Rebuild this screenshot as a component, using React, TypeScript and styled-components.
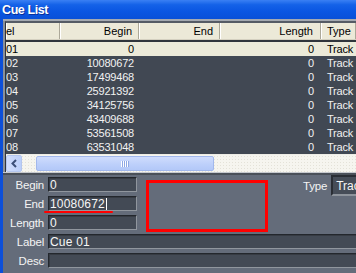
import React from "react";
import styled, { createGlobalStyle } from "styled-components";

const Global = createGlobalStyle`
  html, body { margin: 0; padding: 0; background: #646c7a; }
  body { width: 356px; height: 273px; overflow: hidden; font-family: "Liberation Sans", Arial, sans-serif; }
`;

const Window = styled.div`
  width: 356px;
  height: 273px;
  display: flex;
  flex-direction: column;
  overflow: hidden;
  background: #646c7a;
`;

const TitleBar = styled.div`
  height: 19px;
  flex: none;
  display: flex;
  align-items: center;
  padding-left: 2px;
  background: linear-gradient(#3a80f4 0%, #1462e8 25%, #0a56e2 60%, #0950d8 100%);
  color: #fff;
  font-weight: bold;
  font-size: 12.5px;
  letter-spacing: -0.4px;
  text-shadow: 1px 1px 0 #0a2f9a;
`;

const Body = styled.div`
  flex: 1;
  display: flex;
  flex-direction: column;
  border-left: 3px solid #0c4fd9;
  min-height: 0;
`;

const ListArea = styled.div`
  flex: none;
  background: #8a9098;
  border-top: 2px solid #a4a9b1;
  padding-left: 2px;
`;

const ListBox = styled.div`
  border-top: 2px solid #555b65;
  border-left: 1px solid #30353c;
  background: #414853;
  overflow: hidden;
`;

const HeaderRow = styled.div`
  display: flex;
  height: 17px;
  background: #ece9d8;
  border-bottom: 1px solid #d4d0c0;
  box-sizing: border-box;
`;

const HeaderCell = styled.div<{ $w: number; $align: string; $pad: number }>`
  flex: none;
  width: ${(p) => p.$w}px;
  box-sizing: border-box;
  overflow: hidden;
  white-space: nowrap;
  display: flex;
  align-items: center;
  justify-content: ${(p) => p.$align};
  padding: 0 ${(p) => p.$pad}px;
  border-right: 1px solid #aca899;
  box-shadow: inset 1px 0 0 #ffffff;
  font-size: 11px;
  color: #000;
`;

const HeadSep = styled.div`
  height: 2px;
  background: #30353c;
`;

const Row = styled.div<{ $sel?: boolean }>`
  display: flex;
  height: 14px;
  background: ${(p) => (p.$sel ? "#ecead9" : "#414853")};
  color: ${(p) => (p.$sel ? "#000" : "#f2f2f2")};
  font-size: 11px;
  letter-spacing: -0.2px;
`;

const Cell = styled.div<{ $w: number; $align: string; $pad: number }>`
  flex: none;
  width: ${(p) => p.$w}px;
  box-sizing: border-box;
  overflow: hidden;
  white-space: nowrap;
  display: flex;
  align-items: center;
  justify-content: ${(p) => p.$align};
  padding: 0 ${(p) => p.$pad}px;
`;

const ListBottom = styled.div`
  height: 1px;
  background: #eeede6;
`;

const ScrollBar = styled.div`
  display: flex;
  height: 17px;
  background: #f6f5ef;
  background-image: radial-gradient(#e4e2d8 0.6px, transparent 0.7px);
  background-size: 3px 3px;
`;

const ArrowBtn = styled.div`
  width: 16px;
  flex: none;
  box-sizing: border-box;
  border: 1px solid #b4c6ee;
  border-radius: 2px;
  background: linear-gradient(90deg, #d2defc, #bccffa);
  display: flex;
  align-items: center;
  justify-content: center;
`;

const TrackGap = styled.div`
  width: 14px;
  flex: none;
`;

const Thumb = styled.div`
  width: 178px;
  flex: none;
  box-sizing: border-box;
  border: 1px solid #a2b8ec;
  border-radius: 2px;
  margin: 1px 0;
  background: linear-gradient(#cfdcfd, #bccffa 60%, #b3c8f8);
  display: flex;
  align-items: center;
  justify-content: center;
`;

const Grip = styled.div`
  width: 8px;
  height: 6px;
  background: repeating-linear-gradient(90deg, #ffffff 0 1px, #8ea8e4 1px 2px);
`;

const BandLight = styled.div`
  height: 1px;
  background: #c6c9ce;
`;

const BandDark = styled.div`
  height: 2px;
  background: #4a5059;
`;

const Panel = styled.div`
  position: relative;
  flex: 1;
  display: flex;
  flex-direction: column;
  gap: 4px;
  padding-top: 2px;
  background: #646c7a;
`;

const TopRow = styled.div`
  display: flex;
  align-items: flex-start;
`;

const Fields = styled.div`
  display: flex;
  flex-direction: column;
  gap: 4px;
`;

const FieldRow = styled.div`
  display: grid;
  grid-template-columns: 41px auto;
  column-gap: 4px;
  align-items: center;
`;

const Label = styled.div`
  text-align: right;
  color: #f4f4f4;
  font-size: 11.5px;
  letter-spacing: -0.2px;
  white-space: nowrap;
`;

const Input = styled.div<{ $w: number }>`
  width: ${(p) => p.$w}px;
  height: 15px;
  box-sizing: border-box;
  border: 1px solid;
  border-color: #23272d #90969e #90969e #23272d;
  box-shadow: inset 1px 1px 0 #363b43;
  background: #434a55;
  color: #f6f6f6;
  font-size: 12px;
  letter-spacing: 0.2px;
  padding-left: 1px;
  display: flex;
  align-items: center;
  white-space: nowrap;
  overflow: hidden;
`;

const Caret = styled.span`
  display: inline-block;
  width: 1px;
  height: 12px;
  background: #ffffff;
  margin-left: 1px;
`;

const TypeGroup = styled.div`
  margin-left: 166px;
  margin-top: -2px;
  display: flex;
  align-items: center;
  gap: 4px;
`;

const TypeBox = styled.div`
  width: 26px;
  height: 21px;
  flex: none;
  box-sizing: border-box;
  border: 2px solid;
  border-right: 0;
  border-color: #2a2e35 #8e949c #8e949c #2a2e35;
  background: #464d58;
  color: #f6f6f6;
  font-size: 12px;
  padding-left: 3px;
  display: flex;
  align-items: center;
  white-space: nowrap;
  overflow: hidden;
`;

const RedBox = styled.div`
  position: absolute;
  left: 143px;
  top: 5px;
  width: 122px;
  height: 52px;
  box-sizing: border-box;
  border: 3px solid #ff0000;
`;

const RedLine = styled.div`
  position: absolute;
  left: 41px;
  top: 36px;
  width: 69px;
  height: 2px;
  border-radius: 1px;
  background: #ff0000;
`;

const cols = [
  { key: "label", title: "el", w: 54, align: "flex-start", pad: 0 },
  { key: "begin", title: "Begin", w: 79, align: "flex-end", pad: 6 },
  { key: "end", title: "End", w: 81, align: "flex-end", pad: 6 },
  { key: "length", title: "Length", w: 101, align: "flex-end", pad: 7 },
  { key: "type", title: "Type", w: 35, align: "flex-start", pad: 6 },
];

const rows = [
  ["01", "0"],
  ["02", "10080672"],
  ["03", "17499468"],
  ["04", "25921392"],
  ["05", "34125756"],
  ["06", "43409688"],
  ["07", "53561508"],
  ["08", "63531048"],
];

export default function App() {
  return (
    <Window>
      <Global />
      <TitleBar>Cue List</TitleBar>
      <Body>
        <ListArea>
          <ListBox>
            <HeaderRow>
              {cols.map((c) => (
                <HeaderCell key={c.key} $w={c.w} $align={c.align} $pad={c.pad}>
                  {c.title}
                </HeaderCell>
              ))}
            </HeaderRow>
            <HeadSep />
            {rows.map((r, i) => (
              <Row key={r[0]} $sel={i === 0}>
                <Cell $w={54} $align="flex-start" $pad={0}>{r[0]}</Cell>
                <Cell $w={79} $align="flex-end" $pad={5}>{r[1]}</Cell>
                <Cell $w={81} $align="flex-end" $pad={5}></Cell>
                <Cell $w={101} $align="flex-end" $pad={7}>0</Cell>
                <Cell $w={35} $align="flex-start" $pad={6}>Track</Cell>
              </Row>
            ))}
            <ListBottom />
            <ScrollBar>
              <ArrowBtn>
                <svg width="8" height="9" viewBox="0 0 8 9">
                  <path d="M6 1 L2.5 4.5 L6 8" fill="none" stroke="#3c4f78" strokeWidth="2" />
                </svg>
              </ArrowBtn>
              <TrackGap />
              <Thumb>
                <Grip />
              </Thumb>
            </ScrollBar>
          </ListBox>
        </ListArea>
        <BandLight />
        <BandDark />
        <Panel>
          <TopRow>
            <Fields>
              <FieldRow>
                <Label>Begin</Label>
                <Input $w={89}>0</Input>
              </FieldRow>
              <FieldRow>
                <Label>End</Label>
                <Input $w={89}>
                  10080672
                  <Caret />
                </Input>
              </FieldRow>
              <FieldRow>
                <Label>Length</Label>
                <Input $w={89}>0</Input>
              </FieldRow>
            </Fields>
            <TypeGroup>
              <Label>Type</Label>
              <TypeBox>Trac</TypeBox>
            </TypeGroup>
          </TopRow>
          <FieldRow>
            <Label>Label</Label>
            <Input $w={320}>Cue 01</Input>
          </FieldRow>
          <FieldRow>
            <Label>Desc</Label>
            <Input $w={320}></Input>
          </FieldRow>
          <RedBox />
          <RedLine />
        </Panel>
      </Body>
    </Window>
  );
}
